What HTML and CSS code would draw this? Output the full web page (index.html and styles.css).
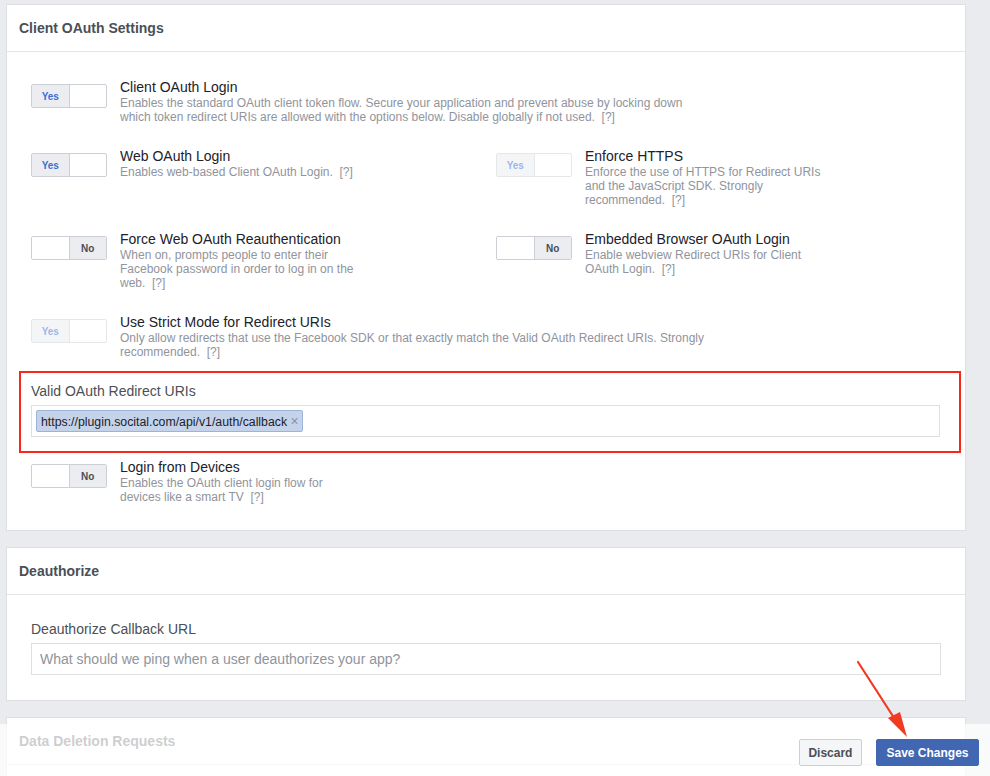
FILE: index.html
```html
<!DOCTYPE html>
<html lang="en">
<head>
  <meta charset="UTF-8" />
  <title>Facebook Login Settings</title>
  <link rel="stylesheet" href="styles.css">
</head>
<body>
  <div class="panel">
    <div class="panel-header">Client OAuth Settings</div>
    <div class="panel-body">
      <div class="settings-grid">
        <div class="setting full">
          <div class="toggle on"><span class="yes">Yes</span><span></span></div>
          <div class="setting-text wide">
            <div class="setting-title">Client OAuth Login</div>
            <div class="setting-desc">Enables the standard OAuth client token flow. Secure your application and prevent abuse by locking down which token redirect URIs are allowed with the options below. Disable globally if not used.&nbsp; [?]</div>
          </div>
        </div>

        <div class="setting">
          <div class="toggle on"><span class="yes">Yes</span><span></span></div>
          <div class="setting-text">
            <div class="setting-title">Web OAuth Login</div>
            <div class="setting-desc">Enables web-based Client OAuth Login.&nbsp; [?]</div>
          </div>
        </div>
        <div class="setting">
          <div class="toggle on disabled"><span class="yes">Yes</span><span></span></div>
          <div class="setting-text">
            <div class="setting-title">Enforce HTTPS</div>
            <div class="setting-desc">Enforce the use of HTTPS for Redirect URIs and the JavaScript SDK. Strongly recommended.&nbsp; [?]</div>
          </div>
        </div>

        <div class="setting">
          <div class="toggle off"><span></span><span class="no">No</span></div>
          <div class="setting-text">
            <div class="setting-title">Force Web OAuth Reauthentication</div>
            <div class="setting-desc">When on, prompts people to enter their Facebook password in order to log in on the web.&nbsp; [?]</div>
          </div>
        </div>
        <div class="setting">
          <div class="toggle off"><span></span><span class="no">No</span></div>
          <div class="setting-text">
            <div class="setting-title">Embedded Browser OAuth Login</div>
            <div class="setting-desc">Enable webview Redirect URIs for Client OAuth Login.&nbsp; [?]</div>
          </div>
        </div>

        <div class="setting full">
          <div class="toggle on disabled"><span class="yes">Yes</span><span></span></div>
          <div class="setting-text wide">
            <div class="setting-title">Use Strict Mode for Redirect URIs</div>
            <div class="setting-desc">Only allow redirects that use the Facebook SDK or that exactly match the Valid OAuth Redirect URIs. Strongly recommended.&nbsp; [?]</div>
          </div>
        </div>
      </div>

      <div class="field highlighted">
        <div class="field-label">Valid OAuth Redirect URIs</div>
        <div class="text-input tokens">
          <span class="token">https://plugin.socital.com/api/v1/auth/callback <span class="token-x">×</span></span>
        </div>
      </div>

      <div class="setting">
        <div class="toggle off"><span></span><span class="no">No</span></div>
        <div class="setting-text">
          <div class="setting-title">Login from Devices</div>
          <div class="setting-desc">Enables the OAuth client login flow for devices like a smart TV&nbsp; [?]</div>
        </div>
      </div>
    </div>
  </div>

  <div class="panel">
    <div class="panel-header">Deauthorize</div>
    <div class="panel-body short">
      <div class="field">
        <div class="field-label">Deauthorize Callback URL</div>
        <div class="text-input placeholder">What should we ping when a user deauthorizes your app?</div>
      </div>
    </div>
  </div>

  <div class="panel last">
    <div class="panel-header">Data Deletion Requests</div>
    <div class="panel-stub"></div>
  </div>

  <div class="save-bar">
    <button class="btn">Discard</button>
    <button class="btn primary">Save Changes</button>
  </div>

  <svg class="arrow" width="70" height="90" viewBox="0 0 70 90">
    <line x1="4" y1="4" x2="44" y2="66" stroke="#f23a22" stroke-width="2.2" stroke-linecap="round" />
    <polygon points="53,79 34,60 46,54" fill="#f23a22" />
  </svg>
</body>
</html>
```

FILE: styles.css
```css
body {
  margin: 0;
  padding: 4px 0 0 6px;
  background: #e9ebee;
  font-family: 'Liberation Sans', Arial, Helvetica, sans-serif;
  color: #1d2129;
  height: 772px;
  overflow: hidden;
}
.panel {
  width: 958px;
  background: white;
  border: 1px solid #dddfe2;
  margin-bottom: 16px;
}
.panel.last {
  margin-bottom: 0;
  border-bottom: none;
}
.panel-header {
  height: 46px;
  line-height: 46px;
  padding: 0 12px;
  border-bottom: 1px solid #e5e5e5;
  font-size: 14px;
  font-weight: bold;
  color: #4b4f56;
}
.panel-body {
  padding: 26px 24px 26px;
}
.panel-body.short {
  padding: 25px 24px 25px;
}
.panel-stub {
  height: 11px;
}
.settings-grid {
  display: grid;
  grid-template-columns: 465px 1fr;
  row-gap: 23px;
}
.setting {
  display: flex;
  gap: 13px;
}
.setting.full {
  grid-column: 1 / 3;
}
.toggle {
  flex: none;
  display: flex;
  width: 74px;
  height: 22px;
  margin-top: 6px;
  border: 1px solid #ccd0d5;
  border-radius: 2px;
  background: white;
  font-size: 10px;
  font-weight: bold;
}
.toggle span {
  flex: 1;
  display: flex;
  align-items: center;
  justify-content: center;
}
.toggle .yes {
  background: #ebedf0;
  border-right: 1px solid #ccd0d5;
  color: #3b6fd4;
}
.toggle .no {
  background: #ebedf0;
  border-left: 1px solid #ccd0d5;
  color: #4b4f56;
}
.toggle.disabled {
  opacity: 0.5;
}
.setting-text {
  width: 240px;
}
.setting-text.wide {
  width: 590px;
}
.setting-title {
  font-size: 14px;
  line-height: 18px;
  color: #1d2129;
}
.setting-desc {
  font-size: 12px;
  line-height: 14px;
  color: #90949c;
}
.field-label {
  font-size: 14px;
  line-height: 18px;
  color: #4b4f56;
  margin-bottom: 5px;
}
.field.highlighted {
  margin: 12px -20px 5px -12px;
  padding: 9px 19px 14px 10px;
  border: 2px solid #f5281a;
}
.text-input {
  box-sizing: border-box;
  height: 32px;
  border: 1px solid #dddfe2;
  padding: 0 8px;
  font-size: 14px;
  line-height: 30px;
}
.text-input.placeholder {
  color: #90949c;
}
.text-input.tokens {
  padding: 4px 4px;
  line-height: normal;
}
.token {
  display: inline-block;
  height: 20px;
  line-height: 20px;
  padding: 0 3px 0 4px;
  background: #c5d3ea;
  border: 1px solid #9cb4d8;
  border-radius: 2px;
  font-size: 12.3px;
  color: #1d2129;
}
.token-x {
  color: #8d949e;
  font-size: 14px;
}
.save-bar {
  position: fixed;
  left: 0;
  right: 0;
  bottom: 0;
  height: 52px;
  box-sizing: border-box;
  padding: 15px 11px 0 0;
  display: flex;
  justify-content: flex-end;
  align-items: flex-start;
  gap: 14px;
  background: rgba(255, 255, 255, 0.72);
}
.btn {
  height: 27px;
  padding: 0 8.5px;
  font-family: 'Liberation Sans', Arial, sans-serif;
  font-size: 12px;
  font-weight: bold;
  border: 1px solid #ccd0d5;
  border-radius: 2px;
  background: #f5f6f7;
  color: #4b4f56;
}
.btn.primary {
  background: #4267b2;
  border-color: #4267b2;
  color: white;
  padding: 0 9.5px;
}
.arrow {
  position: absolute;
  left: 854px;
  top: 658px;
}
```
